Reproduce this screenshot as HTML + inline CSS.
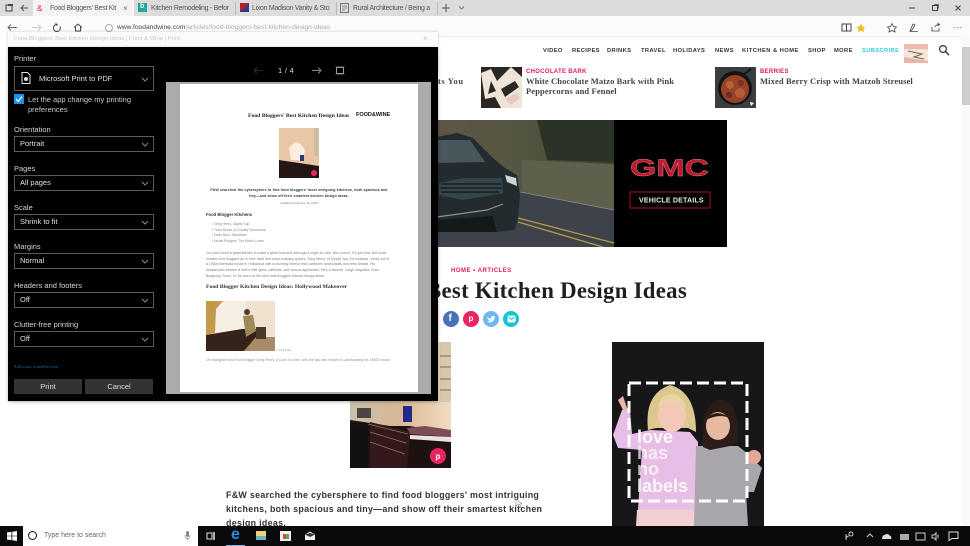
<!DOCTYPE html>
<html><head><meta charset="utf-8">
<style>
html,body{margin:0;padding:0;width:970px;height:546px;overflow:hidden;background:#fff;font-family:"Liberation Sans",sans-serif}
.a{position:absolute}
.t{position:absolute;white-space:nowrap}
.s{font-family:"Liberation Serif","DejaVu Serif",serif;font-weight:700}
.tab{position:absolute;top:4.500px;font-size:7px;letter-spacing:-.3px;color:#555;white-space:nowrap}
.sep{position:absolute;top:2px;width:1px;height:13px;background:#bbb}
.nav{position:absolute;top:48px;font-size:5.800px;font-weight:700;letter-spacing:.35px;color:#333;white-space:nowrap}
.lab{position:absolute;left:14px;font-size:7.500px;color:#d5d5d5;white-space:nowrap}
.sel{position:absolute;left:14px;width:138px;height:14px;border:1px solid #5c5c5c;color:#e0e0e0;font-size:7.500px;line-height:14px;text-indent:5px}
.sel svg{position:absolute;right:4px;top:5px}
.btn{position:absolute;top:379px;height:15px;background:#333;color:#ddd;font-size:7.500px;line-height:15px;text-align:center}
.circ{position:absolute;top:311px;width:16px;height:16px;border-radius:50%}
</style></head><body>

<!-- page content -->
<div class="a" style="left:438px;top:36px;right:0;height:1px;background:#eee"></div>
<div class="nav" style="left:543px">VIDEO</div>
<div class="nav" style="left:572px">RECIPES</div>
<div class="nav" style="left:607px">DRINKS</div>
<div class="nav" style="left:641px">TRAVEL</div>
<div class="nav" style="left:673px">HOLIDAYS</div>
<div class="nav" style="left:715px">NEWS</div>
<div class="nav" style="left:742px;letter-spacing:.45px">KITCHEN &amp; HOME</div>
<div class="nav" style="left:808px">SHOP</div>
<div class="nav" style="left:834px">MORE</div>
<div class="nav" style="left:862px;color:#35cfe0">SUBSCRIBE</div>
<svg class="a" style="left:904px;top:44px" width="24" height="19" viewBox="0 0 24 19"><rect width="24" height="19" fill="#f8e6dc"/><path d="M0 0H24V5H0Z" fill="#f0b9ae"/><path d="M4 7L18 10 10 13 20 15" stroke="#6a6a50" fill="none"/><path d="M0 13L24 17V19H0Z" fill="#eeb3a8"/></svg>
<svg class="a" style="left:938px;top:44px" width="12" height="12" viewBox="0 0 12 12"><circle cx="5" cy="5" r="3.400" fill="none" stroke="#333" stroke-width="1.200"/><path d="M7.500 7.500L11 11" stroke="#333" stroke-width="1.400"/></svg>

<div class="t s" style="left:438px;top:76px;font-size:8.500px;letter-spacing:.6px;color:#444">ts You</div>

<svg class="a" style="left:481px;top:67px" width="41" height="41" viewBox="0 0 41 41"><rect width="41" height="41" fill="#2b2724"/><path d="M0 6L10 2 16 14 30 0 41 10 41 41 20 41 14 30 4 32Z" fill="#eee4d8"/><path d="M20 22L34 14 38 20 24 30ZM10 14L15 24 7 27Z" fill="#2b2724"/><path d="M24 32L36 26 39 31 30 38Z" fill="#e8c9c4"/></svg>
<div class="t" style="left:526px;top:69px;font-size:6px;font-weight:700;letter-spacing:.3px;color:#e8175d">CHOCOLATE BARK</div>
<div class="t s" style="left:526px;top:76px;font-size:8.500px;line-height:10px;letter-spacing:.12px;color:#444">White Chocolate Matzo Bark with Pink<br>Peppercorns and Fennel</div>

<svg class="a" style="left:715px;top:67px" width="41" height="41" viewBox="0 0 41 41"><rect width="41" height="41" fill="#3a3d3f"/><circle cx="20" cy="21" r="17" fill="#161412"/><circle cx="20" cy="22" r="14" fill="#96432a"/><circle cx="15" cy="18" r="4" fill="#b8623a"/><circle cx="25" cy="26" r="5" fill="#b35c38"/><circle cx="14" cy="28" r="3" fill="#6e2a1c"/><circle cx="26" cy="16" r="3" fill="#7a2f20"/><path d="M28 8L36 2" stroke="#161412" stroke-width="2"/><path d="M35 35l4 1-3 3z" fill="#fff"/></svg>
<div class="t" style="left:760px;top:69px;font-size:6px;font-weight:700;letter-spacing:.3px;color:#e8175d">BERRIES</div>
<div class="t s" style="left:760px;top:76px;font-size:8.500px;letter-spacing:.12px;color:#444">Mixed Berry Crisp with Matzoh Streusel</div>

<!-- ad -->
<svg class="a" style="left:437px;top:120px" width="290" height="127" viewBox="0 0 290 127">
<defs><linearGradient id="g1" x1="0" y1="0" x2="1" y2="0"><stop offset="0" stop-color="#5e5648"/><stop offset=".5" stop-color="#545640"/><stop offset="1" stop-color="#3a3f30"/></linearGradient></defs>
<rect width="290" height="127" fill="#000"/>
<rect width="177" height="127" fill="url(#g1)"/>
<path d="M100 0H177V42L110 40Z" fill="#2b3326"/>
<path d="M85 40L177 44V92L85 74Z" fill="#5f604c"/>
<path d="M83 72L177 90V127H0V100Z" fill="#3e434a"/>
<path d="M83 72L177 90" stroke="#8b8d80" stroke-width=".8"/>
<path d="M81 98L177 123M81 102L166 127" stroke="#b59c42" stroke-width="1.300"/>
<path d="M0 17L20 13 36 18 56 38 68 48 80 55 83 75 81 98 78 110 60 112 56 105 0 110Z" fill="#222c2e"/>
<path d="M0 20H33L48 42 0 43Z" fill="#47575c"/>
<path d="M2 63L26 58H65L66 73 26 80 2 75Z" fill="#36454a"/>
<path d="M4 64H64M3 68H65M4 72H62" stroke="#171f21" stroke-width="1.500"/>
<path d="M68 55L79 58 80 66 70 62Z" fill="#cfd4d5"/>
<path d="M0 97L50 90 66 84" stroke="#8a9496" stroke-width="1.200" fill="none"/>
<path d="M0 100L56 96 60 112H0Z" fill="#14191a"/>
<text x="193" y="56" font-family="Liberation Sans" font-weight="700" font-size="24" fill="#bd1a2e" stroke="#e9808c" stroke-width=".4" textLength="79" lengthAdjust="spacingAndGlyphs">GMC</text>
<rect x="193" y="72" width="80" height="16" fill="none" stroke="#6f0d15" stroke-width="1.500"/>
<text x="202" y="82.500" font-family="Liberation Sans" font-weight="700" font-size="7" fill="#eee" letter-spacing=".2">VEHICLE DETAILS</text>
</svg>

<!-- article -->
<div class="t" style="left:451px;top:268px;font-size:6px;font-weight:700;letter-spacing:.5px;color:#e8175d">HOME • ARTICLES</div>
<div class="t s" style="left:287px;top:278px;width:400px;text-align:right;font-size:22.800px;letter-spacing:.28px;color:#1f1f1f;line-height:26px">Bloggers' Best Kitchen Design Ideas</div>

<div class="circ" style="left:443px;background:#4a72b8"></div>
<div class="circ" style="left:463px;background:#e8255f"></div>
<div class="circ" style="left:483px;background:#6db8ef"></div>
<div class="circ" style="left:503px;background:#12c4d3"></div>
<div class="t" style="left:448.500px;top:313px;font-size:10px;font-weight:700;color:#fff">f</div>
<div class="t" style="left:468.500px;top:314px;font-size:8px;font-weight:700;color:#fff">p</div>
<svg class="a" style="left:486px;top:314px" width="10" height="10" viewBox="0 0 10 10"><path d="M1 2.500Q3.500 5 5 4.500Q5 2 7 2L9 2.500 8.500 4Q8 8 4 8.500 2 8.500 1 7.500 3 7.500 3.500 6.500 1.500 5.500 1 2.500Z" fill="#fff"/></svg>
<svg class="a" style="left:507px;top:315px" width="9" height="8" viewBox="0 0 9 8"><rect x=".5" y=".5" width="8" height="7" rx="1.500" fill="#fff"/><path d="M1.500 2L4.500 4.500 7.500 2" fill="none" stroke="#12c4d3"/></svg>

<!-- kitchen photo -->
<svg class="a" style="left:350px;top:342px" width="101" height="126" viewBox="0 0 101 126">
<defs><linearGradient id="k" x1="0" y1="0" x2="1" y2="0"><stop offset="0" stop-color="#c9bfae"/><stop offset=".5" stop-color="#d9b893"/><stop offset="1" stop-color="#f1dcc3"/></linearGradient></defs>
<rect width="101" height="126" fill="url(#k)"/>
<rect x="90" y="0" width="11" height="60" fill="#d6c8ae"/>
<path d="M90 14H101M90 25H101M90 37H101M90 48H101" stroke="#7d6c56"/>
<rect x="53" y="64" width="9" height="16" fill="#23298a"/>
<rect x="7" y="66" width="14" height="10" fill="#4a4644"/>
<path d="M0 78L40 84 60 84 101 92V126H0Z" fill="#1e1210"/>
<path d="M20 80L60 90 57 126H20Z" fill="#33181c"/>
<path d="M18 82L58 92M20 90L56 101M20 100L55 112" stroke="#8f7a5c" stroke-width=".8"/>
<path d="M57 86L75 84 101 88V95L60 92Z" fill="#7c4d58"/>
<path d="M60 93L101 95V100L60 97Z" fill="#e9e4df"/>
<rect x="0" y="84" width="18" height="42" fill="#12100f"/>
<circle cx="88" cy="114" r="8" fill="#e8255f"/>
<text x="85.500" y="117" font-size="8" font-weight="700" fill="#fff" font-family="Liberation Sans">p</text>
</svg>

<!-- lead paragraph -->
<div class="t" style="left:226px;top:488px;font-size:8.900px;line-height:14px;font-weight:700;letter-spacing:.3px;color:#333">F&amp;W searched the cybersphere to find food bloggers' most intriguing<br>kitchens, both spacious and tiny—and show off their smartest kitchen<br>design ideas.</div>
<svg class="a" style="left:515px;top:498px" width="9" height="11" viewBox="0 0 9 11"><path d="M1 1L1 8 3 6.500 5 10 6 9.500 4.500 6 7 6Z" fill="#fff" stroke="#888" stroke-width=".6"/></svg>

<!-- love has no labels -->
<svg class="a" style="left:612px;top:342px" width="152" height="184" viewBox="0 0 152 184">
<rect width="152" height="184" fill="#17171a"/>
<path d="M6 58L11 54 15 66 18 68 13 72Z" fill="#e8b9a9"/>
<path d="M1 93L10 68 18 68 20 92 38 88 78 90 86 100 84 168 26 168 30 108 6 106Z" fill="#e7bfe6"/>
<path d="M25 168H84L83 184H24Z" fill="#f3cfd2"/>
<path d="M84 104L126 104 136 112 150 126 142 150 134 150 136 184 82 184Z" fill="#a9a7ac"/>
<circle cx="142" cy="115" r="7" fill="#e2a795"/>
<path d="M36 88Q32 52 58 43 84 50 84 90L76 86 44 86Z" fill="#dcc78f"/>
<ellipse cx="60" cy="73" rx="14" ry="17" fill="#f3c8b6"/>
<path d="M46 66Q58 52 75 66 70 52 58 52 48 52 46 66Z" fill="#e8d5a2"/>
<path d="M91 105Q88 60 108 58 128 60 126 100L118 104 98 108Z" fill="#2c1c18"/>
<ellipse cx="106" cy="84" rx="12" ry="14" fill="#e7b9a0"/>
<path d="M94 78Q104 64 120 78 110 70 94 78Z" fill="#2c1c18"/>
<rect x="17" y="41" width="118" height="118" fill="none" stroke="#fff" stroke-width="3" stroke-dasharray="12 5"/>
<g font-family="Liberation Sans" font-size="18" font-weight="700" fill="#fff">
<text x="25" y="101" opacity=".9">love</text>
<text x="25" y="117" opacity=".7">has</text>
<text x="25" y="133" opacity=".7">no</text>
<text x="25" y="150" opacity=".85">labels</text>
</g>
</svg>

<!-- scrollbar -->
<div class="a" style="left:962px;top:36px;width:8px;height:490px;background:#f9f9f9"></div>
<div class="a" style="left:962px;top:47px;width:8px;height:58px;background:#cdcdcd"></div>

<!-- tab strip -->
<div class="a" style="left:0;top:0;width:970px;height:16px;background:#dcdcdc"></div>
<svg class="a" style="left:5px;top:3px" width="26" height="10" viewBox="0 0 26 10"><rect x="1" y="2" width="6" height="6" fill="none" stroke="#444"/><rect x="3" y="1" width="5" height="2" fill="#444"/><path d="M16 5H23M19 2L16 5 19 8" fill="none" stroke="#555"/></svg>
<div class="a" style="left:33px;top:0;width:101px;height:16px;background:#f4f4f4"></div>
<div class="t" style="left:37px;top:4px;font-size:8px;color:#e8175d">&amp;</div>
<div class="tab" style="left:50px">Food Bloggers' Best Kit</div>
<div class="t" style="left:123px;top:4px;font-size:8px;color:#666">×</div>
<div class="a" style="left:138px;top:3px;width:9px;height:9px;background:#1fa8a0"></div>
<div class="t" style="left:140px;top:3px;font-size:7px;color:#fff;font-weight:700">b</div>
<div class="tab" style="left:151px">Kitchen Remodeling - Befor</div>
<div class="sep" style="left:235px"></div>
<div class="a" style="left:240px;top:3px;width:9px;height:9px;background:linear-gradient(135deg,#b3202a 50%,#2e3c7c 50%)"></div>
<div class="tab" style="left:252px">Lixon Madison Vanity &amp; Sto</div>
<div class="sep" style="left:336px"></div>
<svg class="a" style="left:340px;top:3px" width="9" height="10" viewBox="0 0 9 10"><rect x=".5" y=".5" width="8" height="9" fill="none" stroke="#777"/><path d="M2 3H7M2 5H7M2 7H5" stroke="#777" stroke-width=".7"/></svg>
<div class="tab" style="left:353px">Rural Architecture / Being a</div>
<div class="sep" style="left:437px"></div>
<svg class="a" style="left:441px;top:3px" width="24" height="10" viewBox="0 0 24 10"><path d="M5 1V9M1 5H9" stroke="#555"/><path d="M18 3.500L20.500 6 23 3.500" fill="none" stroke="#777"/></svg>
<svg class="a" style="left:905px;top:2px" width="60" height="12" viewBox="0 0 60 12"><path d="M4 6H10" stroke="#444"/><rect x="27.500" y="3.500" width="5" height="5" fill="none" stroke="#444"/><path d="M29 2.500H33.500V6.500" fill="none" stroke="#444" stroke-width=".7"/><path d="M50.500 3.500L55.500 8.500M55.500 3.500L50.500 8.500" stroke="#444"/></svg>

<!-- toolbar -->
<div class="a" style="left:0;top:16px;width:970px;height:20px;background:#fcfcfc"></div>
<svg class="a" style="left:5px;top:22px" width="80" height="11" viewBox="0 0 80 11"><path d="M3 5.500H12M6 2.500L3 5.500 6 8.500" fill="none" stroke="#666"/><path d="M27 5.500H36M33 2.500L36 5.500 33 8.500" fill="none" stroke="#ccc"/><path d="M52 2.500A3.500 3.500 0 1 0 55 4.500M51 1V3H53" fill="none" stroke="#444"/><path d="M69 5.500L73 2 77 5.500M70.500 5V9H75.500V5" fill="none" stroke="#444"/></svg>
<div class="a" style="left:105px;top:24px;width:6px;height:6px;border:1px solid #aaa;border-radius:50%"></div>
<div class="t" style="left:117px;top:23.500px;font-size:6.700px;color:#444">www.foodandwine.com<span style="color:#aaa;letter-spacing:.01px">/articles/food-bloggers-best-kitchen-design-ideas</span></div>
<svg class="a" style="left:840px;top:22px" width="125" height="11" viewBox="0 0 125 11"><path d="M2 2H6.500V9H2ZM6.500 2H11V9H6.500Z" fill="none" stroke="#444"/><path d="M21 1.500L22.500 4.500 25.500 5 23.500 7 24 10 21 8.500 18 10 18.500 7 16.500 5 19.500 4.500Z" fill="#f3c01c"/><path d="M52 1.500L53.500 4.500 56.500 5 54.500 7 55 10 52 8.500 49 10 49.500 7 47.500 5 50.500 4.500Z" fill="none" stroke="#444" stroke-width=".8"/><path d="M70 9L73 2 75 3 72 8ZM70 9.500H78" fill="none" stroke="#444" stroke-width=".8"/><path d="M92 5V9H99V6M95 5Q96 2.500 99 2.500M97.500 1L99.500 2.500 97.500 4" fill="none" stroke="#444" stroke-width=".8"/><path d="M114 5.500h1.500M117 5.500h1.500M120 5.500h1.500" stroke="#999"/></svg>

<!-- dialog -->
<div class="a" style="left:8px;top:32px;width:430px;height:15px;background:#fbfbfb;box-shadow:0 0 3px rgba(0,0,0,.2)"></div>
<div class="t" style="left:14px;top:35.500px;font-size:5.900px;color:#c9c9c9">Food Bloggers' Best Kitchen Design Ideas | Food &amp; Wine | Print</div>
<div class="t" style="left:423px;top:34px;font-size:8px;color:#c4c4c4">×</div>
<div class="a" style="left:8px;top:47px;width:430px;height:354px;background:#000;box-shadow:0 1px 3px rgba(0,0,0,.3)"></div>

<div class="lab" style="top:54px">Printer</div>
<div class="sel" style="top:66px;height:23px;line-height:23px;text-indent:24px;width:138px">Microsoft Print to PDF<svg width="8" height="5" viewBox="0 0 8 5" style="top:10px"><path d="M1 1L4 4 7 1" fill="none" stroke="#888"/></svg></div>
<svg class="a" style="left:21px;top:72px" width="10" height="12" viewBox="0 0 10 12"><path d="M1 .5H6.500L9 3V11.500H1Z" fill="none" stroke="#e5e5e5"/><circle cx="5" cy="7" r="2" fill="#e5e5e5"/></svg>
<div class="a" style="left:14px;top:94px;width:10px;height:10px;background:#1e90e6"></div>
<svg class="a" style="left:14px;top:94px" width="10" height="10" viewBox="0 0 10 10"><path d="M2 5L4.200 7.500 8 2.500" fill="none" stroke="#fff" stroke-width="1.200"/></svg>
<div class="t" style="left:28px;top:95px;font-size:7.500px;line-height:10px;color:#ccc">Let the app change my printing<br>preferences</div>

<div class="lab" style="top:125px">Orientation</div>
<div class="sel" style="top:136px">Portrait<svg width="8" height="5" viewBox="0 0 8 5"><path d="M1 1L4 4 7 1" fill="none" stroke="#888"/></svg></div>
<div class="lab" style="top:164px">Pages</div>
<div class="sel" style="top:175px">All pages<svg width="8" height="5" viewBox="0 0 8 5"><path d="M1 1L4 4 7 1" fill="none" stroke="#888"/></svg></div>
<div class="lab" style="top:203px">Scale</div>
<div class="sel" style="top:214px">Shrink to fit<svg width="8" height="5" viewBox="0 0 8 5"><path d="M1 1L4 4 7 1" fill="none" stroke="#888"/></svg></div>
<div class="lab" style="top:242px">Margins</div>
<div class="sel" style="top:253px">Normal<svg width="8" height="5" viewBox="0 0 8 5"><path d="M1 1L4 4 7 1" fill="none" stroke="#888"/></svg></div>
<div class="lab" style="top:281px">Headers and footers</div>
<div class="sel" style="top:292px">Off<svg width="8" height="5" viewBox="0 0 8 5"><path d="M1 1L4 4 7 1" fill="none" stroke="#888"/></svg></div>
<div class="lab" style="top:320px">Clutter-free printing</div>
<div class="sel" style="top:331px">Off<svg width="8" height="5" viewBox="0 0 8 5"><path d="M1 1L4 4 7 1" fill="none" stroke="#888"/></svg></div>
<div class="t" style="left:14px;top:363px;font-size:7.500px;color:#0b5a96;height:5px;overflow:hidden;line-height:9px">More settings</div>
<div class="btn" style="left:14px;width:68px">Print</div>
<div class="btn" style="left:85px;width:68px">Cancel</div>

<svg class="a" style="left:250px;top:65px" width="100" height="11" viewBox="0 0 100 11"><path d="M4 5.500H13M7 2.500L4 5.500 7 8.500" fill="none" stroke="#2a2a2a"/><path d="M62 5.500H71M68 2.500L71 5.500 68 8.500" fill="none" stroke="#888"/><rect x="86.500" y="2.500" width="7" height="6" fill="none" stroke="#999"/><path d="M85 1.500H95M85 9.500H95" stroke="#666" stroke-width=".6"/></svg>
<div class="t" style="left:278px;top:66px;font-size:7.500px;color:#ddd;letter-spacing:.3px">1 / 4</div>

<!-- preview -->
<div class="a" style="left:166px;top:82px;width:265px;height:312px;background:#ababab"></div>
<div class="a" style="left:180px;top:84px;width:238px;height:308px;background:#fff"></div>
<div class="t s" style="left:248px;top:113px;font-size:5.700px;color:#222">Food Bloggers' Best Kitchen Design Ideas</div>
<div class="t" style="left:356px;top:112px;font-size:5.500px;font-weight:700;color:#111">FOOD&amp;WINE</div>
<svg class="a" style="left:279px;top:128px" width="40" height="50" viewBox="0 0 40 50"><rect width="40" height="50" fill="#e9c7a4"/><rect x="35" width="5" height="28" fill="#cdbda3"/><path d="M10 20Q18 8 26 22L24 32H12Z" fill="#fbeee0"/><rect x="21" y="27" width="4" height="6" fill="#283a7a"/><path d="M0 32L40 38V50H0Z" fill="#241616"/><circle cx="35" cy="45" r="3" fill="#e8255f"/></svg>
<div class="t" style="left:180px;top:187px;width:238px;text-align:center;font-size:3.550px;line-height:6px;font-weight:700;color:#333;letter-spacing:.12px">F&amp;W searched the cybersphere to find food bloggers' most intriguing kitchens, both spacious and<br>tiny—and show off their smartest kitchen design ideas.</div>
<div class="t" style="left:180px;top:201px;width:238px;text-align:center;font-size:3px;color:#777">Updated: February 16, 2018</div>
<div class="t" style="left:206px;top:211.500px;font-size:4.200px;font-weight:700;color:#333">Food Blogger Kitchens</div>
<div class="t" style="left:212px;top:222px;font-size:3.300px;line-height:5.500px;color:#888">• Greg Henry, Sippity Sup<br>• Tricia Bozak, A Country Farmhouse<br>• Dean Bros, Zakarinski<br>• Nicole Rodgers, The Kitchn Loves</div>
<div class="t" style="left:206px;top:251px;font-size:3.300px;line-height:5.700px;color:#777;letter-spacing:.08px">You don't need a great kitchen to make a great food and although it might be nice. But could it. It's just that. But some<br>notable food bloggers do in their have and extra-ordinary spaces. Greg Henry, of Sippity Sup, for instance, works out of<br>a 1930s Bermuda house in Hollywood with a stunning interior that combines functionality and retro details. His<br>decade-plus kitchen is still in little glass, cabinets, and various appliances. He's a favorite. Large magnolia. From<br>Burgundy, Dean. In, for more on the best food bloggers' kitchen design ideas.</div>
<div class="t s" style="left:206px;top:284px;font-size:5.700px;color:#333">Food Blogger Kitchen Design Ideas: Hollywood Makeover</div>
<svg class="a" style="left:206px;top:301px" width="69" height="50" viewBox="0 0 69 50"><rect width="69" height="50" fill="#f7efe3"/><path d="M0 0H17L10 8 9 32 0 34Z" fill="#c39a4a"/><rect x="40" width="29" height="36" fill="#efe3d0"/><path d="M0 34L36 28 50 28 50 38 38 50H0Z" fill="#35231a"/><path d="M38 50L50 36H69V50Z" fill="#a88c68"/><path d="M37 15L47 14 50 30 40 36Z" fill="#9d8b57"/><circle cx="41" cy="11" r="3" fill="#553a2a"/><rect x="50" y="26" width="10" height="12" fill="#4a3a2e"/></svg>
<div class="t" style="left:276px;top:348px;font-size:3px;color:#999">© Phil Shay</div>
<div class="t" style="left:206px;top:358px;font-size:3.300px;color:#888;letter-spacing:.08px">On Instagram and Food Blogger Greg Henry, a Cook in Lives, with the app and Instant of Landscaping his 1930S house.</div>

<!-- taskbar -->
<div class="a" style="left:0;top:526px;width:970px;height:20px;background:#0a0a0c"></div>
<svg class="a" style="left:7px;top:531px" width="10" height="10" viewBox="0 0 10 10"><path d="M0 1.500L4.500 .8V4.700H0ZM5.300 .7L10 0V4.700H5.300ZM0 5.300H4.500V9.200L0 8.500ZM5.300 5.300H10V10L5.300 9.300Z" fill="#fff"/></svg>
<div class="a" style="left:23px;top:526px;width:175px;height:20px;background:#fff"></div>
<div class="a" style="left:28px;top:531px;width:7px;height:7px;border:1.500px solid #111;border-radius:50%"></div>
<div class="t" style="left:44px;top:532px;font-size:7px;color:#666">Type here to search</div>
<svg class="a" style="left:184px;top:530px" width="7" height="11" viewBox="0 0 7 11"><rect x="2" y="1" width="3" height="6" rx="1.500" fill="#888"/><path d="M1 5Q1 8.500 3.500 8.500 6 8.500 6 5M3.500 8.500V10.500" fill="none" stroke="#888" stroke-width=".7"/></svg>
<svg class="a" style="left:206px;top:531px" width="10" height="10" viewBox="0 0 10 10"><rect x="1" y="2" width="5" height="6" fill="none" stroke="#ddd"/><path d="M8 1V9" stroke="#ddd" stroke-width="1.500"/></svg>
<div class="t" style="left:231px;top:526px;font-size:16px;line-height:18px;font-weight:700;color:#1f8fe6">e</div>
<div class="a" style="left:226px;top:545px;width:19px;height:1px;background:#7db8e8"></div>
<div class="a" style="left:256px;top:531px;width:10px;height:9px;background:linear-gradient(#f1d36f 55%,#6bb2c7 55%)"></div>
<div class="a" style="left:280px;top:531px;width:11px;height:10px;background:#eee"></div>
<div class="a" style="left:283px;top:534px;width:6px;height:5px;background:linear-gradient(90deg,#e0483a 50%,#4cae4c 50%)"></div>
<svg class="a" style="left:304px;top:531px" width="12" height="10" viewBox="0 0 12 10"><path d="M1 3.500L6 .5 11 3.500V9H1Z" fill="#eee"/><path d="M1 3.500L6 6 11 3.500 6 2Z" fill="#333"/></svg>
<svg class="a" style="left:845px;top:530px" width="124" height="12" viewBox="0 0 124 12"><circle cx="6" cy="4" r="2" fill="none" stroke="#ccc"/><path d="M1 10Q1 6 4 6M1 4V9" fill="none" stroke="#ccc"/><path d="M22 7L25 4 28 7" fill="none" stroke="#ccc"/><path d="M37 9H46Q47 6 44.500 5.500 43 3 40.500 4.500 37 5 37 9Z" fill="#ddd"/><rect x="55" y="4" width="9" height="6" fill="#aaa"/><rect x="71" y="3" width="9" height="7" fill="none" stroke="#ccc"/><path d="M87 5H89L91 3V10L89 8H87ZM93 4.500V8.500" fill="none" stroke="#ccc"/><path d="M104 2H113V8.500H107L104 10.500Z" fill="none" stroke="#ddd"/></svg>
</body></html>
